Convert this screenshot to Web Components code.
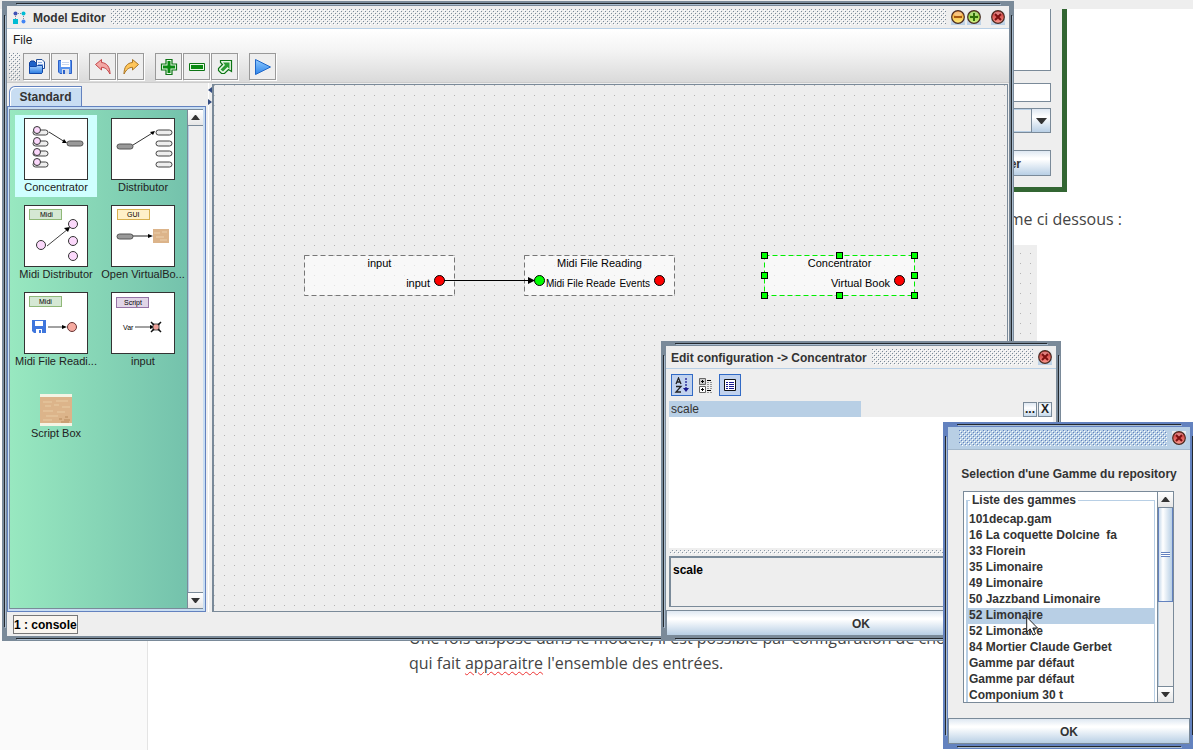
<!DOCTYPE html>
<html lang="fr">
<head>
<meta charset="utf-8">
<title>Model Editor</title>
<style>
html,body{margin:0;height:100%}
body{background:#fff;font:12px/16px "Liberation Sans",Arial,sans-serif;color:#333;overflow:hidden}
</style>
</head>
<body>
<model-desktop></model-desktop>
<script>
const bumps = (c, w='%23fff') => `url("data:image/svg+xml,%3Csvg xmlns='http://www.w3.org/2000/svg' width='4' height='4' shape-rendering='crispEdges'%3E%3Cpath fill='%23${c}' d='M0 0h1v1h-1zM2 2h1v1h-1z'/%3E%3Cpath fill='${w}' d='M1 1h1v1h-1zM3 3h1v1h-1z'/%3E%3C/svg%3E")`;

function define(name, html, setup){
  const t = document.createElement('template');
  t.innerHTML = html;
  customElements.define(name, class extends HTMLElement{
    constructor(){
      super();
      this.attachShadow({mode:'open'}).append(t.content.cloneNode(true));
    }
    connectedCallback(){ if(setup) setup(this, this.shadowRoot); }
  });
}

/* round window button: minimise, maximise, close */
define('window-button', `
<style>
:host{display:block;width:14px;height:15px}
button{display:block;width:14px;height:15px;padding:0;border:0;background:linear-gradient(#eee,#b8cfe5)}
svg{display:block}
</style>
<button type="button"><svg width="14" height="15" viewBox="0 0 14 15">
<defs><linearGradient id="g" x2="0" y2="1"><stop offset="0" class="a"/><stop offset="1" class="b"/></linearGradient></defs>
<circle cx="7" cy="7" r="6.3" fill="url(#g)" stroke="#4a2a20" stroke-width="1.2"/>
<ellipse cx="7" cy="3.8" rx="4" ry="2" fill="#fff" opacity=".35"/>
<path class="m" fill="none" stroke-width="2"/></svg></button>`, (h, r) => {
  const k = {
    min:['#f08a28','#fff27a','M3 7H11','#a85a10','Minimiser'],
    max:['#6fb822','#d6f58a','M3 7H11M7 3V11','#2f6d0a','Agrandir'],
    close:['#c02424','#ff9c92','M4 4L10 10M10 4L4 10','#7d1010','Fermer']}[h.getAttribute('kind')];
  r.querySelector('.a').setAttribute('stop-color', k[0]);
  r.querySelector('.b').setAttribute('stop-color', k[1]);
  const m = r.querySelector('.m'); m.setAttribute('d', k[2]); m.setAttribute('stroke', k[3]);
  r.querySelector('button').setAttribute('aria-label', k[4]);
});

/* internal frame with the Metal border */
define('metal-window', `
<style>
:host{--frame:#7a8a99;--bar:#eee;--rule:#b8cfe5;--ink:#23282d;--shine:#a9bccf;--bumps:${bumps('7a8a99')};
display:flex;flex-direction:column;box-sizing:border-box;padding:5px;
background:
linear-gradient(var(--ink),var(--ink)) 14px 2px/calc(100% - 28px) 1px no-repeat,
linear-gradient(var(--shine),var(--shine)) 15px 3px/calc(100% - 28px) 1px no-repeat,
linear-gradient(var(--ink),var(--ink)) 14px calc(100% - 2px)/calc(100% - 28px) 1px no-repeat,
linear-gradient(var(--shine),var(--shine)) 15px calc(100% - 1px)/calc(100% - 28px) 1px no-repeat,
linear-gradient(var(--ink),var(--ink)) 2px 14px/1px calc(100% - 28px) no-repeat,
linear-gradient(var(--shine),var(--shine)) 3px 15px/1px calc(100% - 28px) no-repeat,
linear-gradient(var(--ink),var(--ink)) calc(100% - 2px) 14px/1px calc(100% - 28px) no-repeat,
linear-gradient(var(--shine),var(--shine)) calc(100% - 1px) 15px/1px calc(100% - 28px) no-repeat,
var(--frame)}
:host([active]){--frame:#6382bf;--bar:#b8cfe5;--rule:#a3b8cc;--bumps:${bumps('6382bf')}}
header{display:flex;height:22px;align-items:center;background:var(--bar);border-bottom:1px solid var(--rule);padding:0 4px 0 5px;gap:5px;flex:none}
h1{margin:0;padding-top:1px;font-size:12px;line-height:16px;font-weight:bold;white-space:nowrap;display:flex;align-items:center}
.b{flex:1;height:16px;background:var(--bumps)}
:host([active]) .b{margin-left:1px}
main{flex:1;min-height:0;display:flex;flex-direction:column;background:#eee}
</style>
<header><h1><slot name="title"></slot></h1><div class="b"></div><slot name="buttons"></slot></header>
<main><slot></slot></main>`);

define('metal-button', `
<style>
:host{display:block}
button{display:block;box-sizing:border-box;width:100%;height:26px;border:1px solid #7a8a99;padding:2px 0 0;color:#333;
font:bold 12px/16px "Liberation Sans",Arial,sans-serif;background:linear-gradient(#dfe8f2,#fff 30%,#fff 35%,#b8cfe5)}
:host([end]) button{text-align:right;padding-right:29px}
</style><button type="button"><slot></slot></button>`);

define('metal-scrollbar', `
<style>
:host{display:flex;flex-direction:column;box-sizing:border-box;width:16px;border-left:1px solid #7a8a99;background:#eee}
button{height:16px;padding:0;border:0;border-bottom:1px solid #7a8a99;background:linear-gradient(#fff,#e6e6e6);flex:none}
button.d{border-bottom:0;border-top:1px solid #7a8a99}
svg{display:block;margin:auto}
.t{flex:1;display:flex;flex-direction:column;border-left:1px solid #b8cfe5}
.thumb{display:none;height:var(--thumb,0);border:1px solid #6382bf;border-top:0;margin-left:-1px;
background:linear-gradient(90deg,#c8daec,#fff 30%,#b8cfe5);align-items:center;justify-content:center}
:host([thumb]) .thumb{display:flex}
.thumb i{width:9px;height:5px;background:repeating-linear-gradient(#6382bf 0 1px,#fff 1px 2px)}
</style>
<button type="button" aria-label="Haut"><svg width="9" height="5"><path d="M0 5L4 0H5L9 5Z" fill="#333"/></svg></button>
<div class="t"><div class="thumb"><i></i></div></div>
<button type="button" class="d" aria-label="Bas"><svg width="9" height="5"><path d="M0 0L4 5H5L9 0Z" fill="#333"/></svg></button>`);

define('tool-button', `
<style>
:host{display:block}
button{display:flex;align-items:center;justify-content:center;box-sizing:border-box;width:27px;height:27px;padding:0;
border:1px solid #999;background:#eee;box-shadow:1px 1px #fff}
:host([flat]) button{width:22px;height:22px;border:1px solid transparent;box-shadow:none;background:none}
:host([flat][on]) button{border-color:#316ac5;background:#c1d2ee}
</style><button type="button"><slot></slot></button>`, (h, r) =>
  r.querySelector('button').setAttribute('aria-label', h.getAttribute('label')));

define('editor-toolbar', `
<style>
:host{display:block;background:linear-gradient(#fff,#f4f4f4 40%,#dadada);border-bottom:1px solid #ccc;flex:none}
nav{height:21px;display:flex;padding:0 6px}
nav button{border:0;background:none;padding:0;font:12px/16px "Liberation Sans",Arial,sans-serif;color:#222}
.bar{display:flex;height:29px;padding:3px 2px 0;gap:1px}
.grip{width:11px;height:28px;margin-right:2px;background:${bumps('7a8a99')}}
.gap{width:9px}
svg{display:block}
</style>
<nav><button type="button">File</button></nav>
<div class="bar">
<span class="grip"></span>
<tool-button label="Ouvrir"><svg width="18" height="18" viewBox="0 0 18 18"><defs><linearGradient id="f" x2="0" y2="1"><stop offset="0" stop-color="#a8d4ff"/><stop offset="1" stop-color="#2a7be0"/></linearGradient></defs><path d="M1.500 15.500V4.500L3 3H6L7.500 4.500H13.500V15.500Z" fill="#1d62c8" stroke="#0c3c98"/><path d="M8.500 1.500H14L16.500 4V10.500H8.500Z" fill="#f2f7ff" stroke="#234f98"/><path d="M10 4.500h4M10 6.500h5" stroke="#8db0e2"/><path d="M1.500 8.500H8L9.500 7.500H14.500V14.500L13.500 15.500H2.500L1.500 14.500Z" fill="url(#f)" stroke="#1248a8"/></svg></tool-button>
<tool-button label="Enregistrer"><svg width="16" height="16" viewBox="0 0 16 16"><path d="M1.500 1.500H14.500V14.500H3L1.500 13Z" fill="#5b95ee" stroke="#2c60c8"/><path d="M4 1H13V8H4Z" fill="#fff"/><path d="M5 3.500h7M5 5.500h7" stroke="#c8d6ee"/><path d="M5 10H12V15H5Z" fill="#d5ddea"/><path d="M6 11h2v4H6z" fill="#2c60c8"/></svg></tool-button>
<span class="gap"></span>
<tool-button label="Annuler"><svg width="18" height="18" viewBox="0 0 18 18"><path d="M1.500 6.500L7.500 1.500V4.500C13 5 16 9 16 16C13.500 11.500 11.500 9.500 7.500 9.300V12Z" fill="#f3a7a4" stroke="#c4474a"/></svg></tool-button>
<tool-button label="Rétablir"><svg width="18" height="18" viewBox="0 0 18 18"><path d="M16.500 6.500L10.500 1.500V4.500C5 5 2 9 2 16C4.500 11.500 6.500 9.500 10.500 9.300V12Z" fill="#ffc65a" stroke="#a87424"/></svg></tool-button>
<span class="gap"></span>
<tool-button label="Ajouter"><svg width="18" height="18" viewBox="0 0 18 18"><path d="M6 1.500H12V6H16.500V12H12V16.500H6V12H1.500V6H6Z" fill="#e8f8e6" stroke="#0c7414" stroke-width="1.200"/><path d="M7.500 3H10.500V7.500H15V10.500H10.500V15H7.500V10.500H3V7.500H7.500Z" fill="#0a8a12"/></svg></tool-button>
<tool-button label="Retirer"><svg width="18" height="18" viewBox="0 0 18 18"><path d="M1.500 5.500H16.500V12.500H1.500Z" fill="#e8f8e6" stroke="#0c7414"/><path d="M3 7H15V11H3Z" fill="#0a8a12"/></svg></tool-button>
<tool-button label="Exporter"><svg width="18" height="18" viewBox="0 0 18 18"><path d="M4.500 2.500H15.500V13.500L12.500 11.500L8.500 15.500H5.500L2.500 12.500V10.500L6.500 6.500L4.500 4.500Z" fill="#e8f8e6" stroke="#0c7414" stroke-width="1.200"/><path d="M7 4.500H13.500V11L11.500 9L7 13.500L4.500 11.500L9 7Z" fill="#2c9c34"/></svg></tool-button>
<span class="gap"></span>
<tool-button label="Lancer"><svg width="18" height="18" viewBox="0 0 18 18"><defs><linearGradient id="p" x2="0" y2="1"><stop offset="0" stop-color="#8cc8ff"/><stop offset="1" stop-color="#2f86ea"/></linearGradient></defs><path d="M1.500 1.500L16.500 9L1.500 16.500Z" fill="url(#p)" stroke="#1e66c8"/></svg></tool-button>
</div>`);

define('palette-item', `
<style>
:host{display:block}
button{display:flex;flex-direction:column;align-items:center;justify-content:center;width:82px;height:82px;padding:0;border:0;background:none;
font:11px/14px "Liberation Sans",Arial,sans-serif;color:#222;white-space:nowrap}
:host([selected]) button{background:#cfffff}
.i{display:block;box-sizing:border-box;border:1px solid #333;width:64px;height:62px;background:#fff}
:host([plain]) .i{border:0;width:32px;height:32px}
</style>
<button type="button"><span class="i"><slot name="icon"></slot></span><span><slot></slot></span></button>`);

define('component-palette', `
<style>
:host{display:flex;flex-direction:column;width:199px;padding-top:3px;margin-right:1px;flex:none}
.tab{align-self:flex-start;margin-left:2px;height:20px;width:73px;box-sizing:border-box;padding:0;border:1px solid #6382bf;border-bottom:0;
border-top-left-radius:6px;background:#c8ddf2;color:#333;font:bold 12px/16px "Liberation Sans",Arial,sans-serif;box-shadow:inset 1px 1px #fff}
.pane{flex:1;min-height:0;box-sizing:border-box;border:1px solid #6382bf;background:#c8ddf2;padding:2px 2px 2px 1px;display:flex}
.view{flex:1;display:flex;border:1px solid #7a8a99;border-right:0}
.grid{flex:1;display:grid;grid-template-columns:82px 82px;grid-auto-rows:82px;gap:5px;align-content:start;padding:5px 0 5px 5px;
background:linear-gradient(90deg,#98e8c0,#74c2ac)}
svg{display:block;font:8px "Liberation Sans",Arial,sans-serif}
</style>
<button class="tab" type="button" role="tab" aria-selected="true">Standard</button>
<div class="pane"><div class="view"><div class="grid">
<palette-item selected>Concentrator
<svg slot="icon" width="62" height="60"><g fill="#eee" stroke="#444"><rect x="8" y="11" width="15" height="5" rx="2.500"/><rect x="8" y="22" width="15" height="5" rx="2.500"/><rect x="8" y="32" width="15" height="5" rx="2.500"/><rect x="8" y="43" width="15" height="5" rx="2.500"/></g><g fill="#fbd8fb" stroke="#333"><circle cx="12" cy="11" r="3.500"/><circle cx="12" cy="22" r="3.500"/><circle cx="12" cy="33" r="3.500"/><circle cx="12" cy="43" r="3.500"/></g><path d="M24 13L40 23" stroke="#333" /><path d="M42 24L37 24L39 20Z"/><rect x="42" y="22" width="16" height="5" rx="2.500" fill="#999" stroke="#555"/></svg></palette-item>
<palette-item>Distributor
<svg slot="icon" width="62" height="60"><g fill="#eee" stroke="#444"><rect x="44" y="11" width="16" height="5" rx="2.500"/><rect x="44" y="22" width="16" height="5" rx="2.500"/><rect x="44" y="32" width="16" height="5" rx="2.500"/><rect x="44" y="43" width="16" height="5" rx="2.500"/></g><path d="M21 26L42 13" stroke="#333"/><path d="M43 12L38 13L41 16Z"/><rect x="5" y="25" width="16" height="5" rx="2.500" fill="#999" stroke="#555"/></svg></palette-item>
<palette-item>Midi Distributor
<svg slot="icon" width="62" height="60"><rect x="4.500" y="3.500" width="32" height="10" fill="#d5e8d4" stroke="#90b878"/><text x="15" y="11" font-size="7">Midi</text><path d="M22 40L43 23" stroke="#444"/><path d="M45 21L39 22L43 26Z"/><g fill="#fbd8fb" stroke="#333"><circle cx="16" cy="39" r="4.500"/><circle cx="48" cy="18" r="4.500"/><circle cx="48" cy="35" r="4.500"/><circle cx="48" cy="50" r="4.500"/></g></svg></palette-item>
<palette-item>Open VirtualBo...
<svg slot="icon" width="62" height="60"><rect x="5.500" y="3.500" width="32" height="10" fill="#fff0c8" stroke="#d8b050"/><text x="15" y="11" font-size="7">GUI</text><path d="M20 30H38" stroke="#222"/><path d="M41 30L36 28V32Z"/><rect x="5" y="28" width="16" height="5" rx="2.500" fill="#999" stroke="#555"/><rect x="41" y="23" width="16" height="14" fill="#dcb48a"/><path d="M42 27h6M50 26h5M44 31h8M48 34h7" stroke="#ecd0ac"/></svg></palette-item>
<palette-item>Midi File Readi...
<svg slot="icon" width="62" height="60"><rect x="4.500" y="3.500" width="32" height="10" fill="#d5e8d4" stroke="#90b878"/><text x="14" y="11" font-size="7">Midi</text><path d="M7 27H21V40H9L7 38Z" fill="#3f76dd"/><path d="M10 28H18V33H10ZM11 36H17V40H11Z" fill="#fff"/><path d="M14 37h2v3h-2z" fill="#3f76dd"/><path d="M23 34H38" stroke="#444"/><path d="M42 34L37 32V36Z"/><circle cx="47" cy="34" r="4.500" fill="#f6aaa0" stroke="#633"/></svg></palette-item>
<palette-item>input
<svg slot="icon" width="62" height="60"><rect x="4.500" y="4.500" width="32" height="10" fill="#e1d5e7" stroke="#9673a6"/><text x="12" y="12" font-size="7">Script</text><text x="11" y="37" font-size="7">Var</text><path d="M23 34H40" stroke="#444"/><path d="M43 34L38 32V36Z"/><rect x="41" y="31" width="6" height="6" fill="#f0a098" stroke="#555"/><path d="M39 29L42 32M49 29L46 32M39 39L42 36M49 39L46 36" stroke="#111" stroke-width="1.500"/></svg></palette-item>
<palette-item plain>Script Box
<svg slot="icon" width="32" height="32"><rect width="32" height="32" fill="#dcb48a"/><path d="M0 0H32V3H0ZM0 29H32V32H0Z" fill="#f4f4e4"/><path d="M3 8h9M16 7h12M5 12h6M14 11h5M22 13h8M3 17h10M17 18h8M6 22h12M3 26h9" stroke="#e8cca4"/><path d="M19 25h3M24 26h6M21 28h8M25 23h3" stroke="#b88a5c"/></svg></palette-item>
</div><metal-scrollbar></metal-scrollbar></div></div>`);

/* graph node: title, input and output ports */
define('graph-node', `
<style>
:host{position:absolute;display:block;width:151px;height:41px;font-size:11px;line-height:13px;color:#000}
svg.f{position:absolute;inset:0;overflow:visible}
.t{position:relative;text-align:center;padding:2px 0 5px}
.p{position:relative;display:flex;padding:0 10px;align-items:center;height:13px;white-space:nowrap}
.in,.out{box-sizing:border-box;width:11px;height:11px;border-radius:50%;border:1px solid #000;background:red;flex:none;margin-bottom:3px}
.in{background:#0f0;display:none}
:host([input]) .in{display:block}
:host([input]) .p{font-size:10px}
.l{flex:1;padding-left:1px;margin-top:3px}
.r{margin:3px 4px 0 0}
.h{display:none}
:host([selected]) .h{display:inline}
:host([selected]) .e{stroke:#0e0}
</style>
<svg class="f" width="151" height="41"><rect class="e" x=".5" y=".5" width="150" height="40" fill="#fff" fill-opacity=".6" stroke="#777" stroke-dasharray="5 3"/></svg>
<div class="t"><slot></slot></div>
<div class="p"><span class="in"></span><span class="l"><slot name="in"></slot></span><span class="r"><slot name="out"></slot></span><span class="out"></span></div>
<svg class="f h" width="151" height="41"></svg>`, (h, r) => {
  let s = '';
  for (const [x, y] of [[0,0],[75,0],[150,0],[0,20],[150,20],[0,40],[75,40],[150,40]])
    s += `<rect x="${x-3}" y="${y-3}" width="7" height="7"/><rect x="${x-2}" y="${y-2}" width="5" height="5" fill="#0f0"/>`;
  r.querySelector('.h').innerHTML = s;
});

define('graph-canvas', `
<style>
:host{display:block;position:relative;flex:1;overflow:hidden;margin:1px 1px 0 0;border:solid #7a8a99;border-width:1px 1px 1px 2px;
background:url("data:image/svg+xml,%3Csvg xmlns='http://www.w3.org/2000/svg' width='10' height='10'%3E%3Cpath fill='%23b4b4b4' d='M0 0h1v1h-1z'/%3E%3C/svg%3E"),#eee}
.n1{left:90px;top:170px}.n2{left:310px;top:170px}.n3{left:550px;top:170px}
.w{position:absolute;left:230px;top:190px}
</style>
<graph-node class="n1">input<span slot="out">input</span></graph-node>
<graph-node class="n2" input>Midi File Reading<span slot="in">Midi File Reade</span><span slot="out">Events</span></graph-node>
<graph-node class="n3" selected>Concentrator<span slot="out">Virtual Book</span></graph-node>
<svg class="w" width="92" height="12"><path d="M0 5.500H86" stroke="#000"/><path d="M91 5.500L84 2V9Z"/></svg>`);

define('editor-window', `
<style>
:host{display:flex;flex-direction:column;flex:1;min-height:0}
.body{flex:1;min-height:0;display:flex;background:#eee}
.split{width:5px;flex:none;background:linear-gradient(90deg,#eee 1px,#fff 1px 2px,#eee 2px)}
.split svg{display:block}
footer{height:24px;flex:none;padding:3px 6px 0;box-sizing:border-box;background:#eee}
footer button{display:block;height:19px;border:1px solid #777;padding:1px 0 0;background:#faf6f0;color:#000;font:bold 12px/16px "Liberation Sans",Arial,sans-serif}
</style>
<editor-toolbar></editor-toolbar>
<div class="body"><component-palette></component-palette>
<div class="split"><svg width="5" height="24"><path d="M5 4V10L1 7Z M1 16V22L5 19Z" fill="#334c80"/></svg></div>
<graph-canvas></graph-canvas></div>
<footer><button type="button">1 : console</button></footer>`);

define('property-sheet', `
<style>
:host{display:flex;flex-direction:column;flex:1;min-height:0}
.bar{display:flex;gap:2px;padding:5px 5px 0}
svg{display:block}
.sheet{flex:1;margin:5px 3px 0;background:#fff}
table{width:100%;border-collapse:collapse;table-layout:fixed;background:#eee}
th,td{padding:0;height:16px;line-height:15px;text-align:left;font-weight:normal}
th{background:#b8cfe5;padding-left:2px}
.c{display:flex;justify-content:flex-end;gap:1px;padding-right:1px}
.c button{box-sizing:border-box;width:14px;height:15px;padding:0;border:1px solid #7a8a99;background:linear-gradient(#dfe8f2,#fff 40%,#c4d8ea);
font:bold 12px/12px "Liberation Sans",Arial,sans-serif;color:#222}
.split{height:8px;margin:0 4px;background:${bumps('8a98a6')} 0 2px/4px 4px content-box;box-sizing:border-box;padding:2px 0}
.desc{margin:0 3px 3px;height:48px;border:solid #7a8a99;border-width:2px 1px 1px 2px;color:#000;font-weight:bold}
.desc p{margin:4px 2px}
</style>
<div class="bar">
<tool-button flat on label="Tri alphabétique"><svg width="16" height="16" viewBox="0 0 16 16" fill="none" stroke="#222" stroke-width="1.300"><path d="M2 7L4.500 1L7 7M3 5H6M2 9.500H7L2 15H7"/><path d="M12 1V12" stroke="#1a1a90" stroke-dasharray="2 1"/><path d="M9 11H15L12 15Z" fill="#1a1a90" stroke="none"/></svg></tool-button>
<tool-button flat label="Catégories"><svg width="16" height="16" viewBox="0 0 16 16" fill="none" stroke="#666"><path d="M1.500 1.500H7.500V7.500H1.500Z" fill="#ccc"/><path d="M1.500 9.500H7.500V15.500H1.500Z" fill="#fff"/><path d="M3 4.500H6M4.500 3V6M3 12.500H6M4.500 11V14" stroke="#000"/><path d="M9 3.500H13M9 13.500H13" stroke="#000"/><path d="M9 5.500H15M9 7.500H15M9 9.500H15M9 11.500H15M9 15.500H15" stroke="#999" stroke-dasharray="2 1"/></svg></tool-button>
<tool-button flat on label="Description"><svg width="14" height="14" viewBox="0 0 14 14"><path d="M1.500 1.500H12.500V12.500H1.500Z" fill="#fff" stroke="#111"/><path d="M3 4.500H5M3 6.500H5M3 8.500H5M3 10.500H5M6 4.500H11M6 6.500H11M6 8.500H11M6 10.500H11" stroke="#1a1a90"/></svg></tool-button>
</div>
<div class="sheet"><table><tr><th scope="row">scale</th><td><div class="c"><button type="button">...</button><button type="button">X</button></div></td></tr></table></div>
<div class="split"></div>
<div class="desc"><p>scale</p></div>
<metal-button>OK</metal-button>`);

define('scale-chooser', `
<style>
:host{display:flex;flex-direction:column;flex:1;min-height:0;font-weight:bold}
label{text-align:center;padding:16px 0 9px;white-space:nowrap}
.pane{flex:1;min-height:0;display:flex;margin:0 16px 15px 15px;border:1px solid #7a8a99;background:#fff;overflow:hidden}
fieldset{flex:1;min-width:0;margin:0 2px;padding:4px 0 0;border:1px solid #b8cfe5;border-left-width:2px;height:220px;box-sizing:border-box}
legend{margin-left:2px;padding:0 2px;line-height:16px}
select{display:block;width:100%;height:192px;border:0;padding:0;margin:0;outline:0;overflow:hidden;background:#fff;color:#333;font:bold 12px/16px "Liberation Sans",Arial,sans-serif;scrollbar-width:none}
option{padding:0 0 0 1px;height:16px;min-height:16px;font:bold 12px/16px "Liberation Sans",Arial,sans-serif;color:#333;white-space:pre}
option:checked{background:linear-gradient(#b8cfe5,#b8cfe5);color:#333}
metal-scrollbar{--thumb:93px}
</style>
<label for="g">Selection d'une Gamme du repository</label>
<div class="pane"><fieldset><legend>Liste des gammes</legend>
<select id="g" size="12"><option>101decap.gam<option>16 La coquette Dolcine&nbsp; fa<option>33 Florein<option>35 Limonaire<option>49 Limonaire<option>50 Jazzband Limonaire<option selected>52 Limonaire<option>52 Limonaire<option>84 Mortier Claude Gerbet<option>Gamme par défaut<option>Gamme par défaut<option>Componium 30 t</select></fieldset>
<metal-scrollbar thumb></metal-scrollbar></div>
<metal-button>OK</metal-button>`);

/* form behind the editor */
define('form-window', `
<style>
:host{display:block;box-sizing:border-box;border:solid #363;border-width:0 5px 5px;padding:0 11px 11px;
background:
linear-gradient(#1c241c,#1c241c) 0 calc(100% - 2px)/calc(100% - 12px) 1px no-repeat border-box,
linear-gradient(#a3b8cc,#a3b8cc) 0 calc(100% - 1px)/calc(100% - 12px) 1px no-repeat border-box,
#eee}
textarea,input,select{display:block;box-sizing:border-box;width:100%;margin:0;border:1px solid #7a8a99;border-radius:0;background:#fff;resize:none;outline:0}
textarea{height:62px;border-top:0;margin-bottom:12px}
input{height:19px;margin-bottom:6px}
.combo{position:relative;margin-bottom:17px}
select{height:25px;appearance:none;background:#eee;box-shadow:inset 0 0 0 1px #b8cfe5}
.combo span{position:absolute;right:0;top:0;width:20px;height:25px;box-sizing:border-box;border:1px solid #7a8a99;background:linear-gradient(#dfe8f2,#fff 35%,#b8cfe5);display:flex;align-items:center;justify-content:center;pointer-events:none}
</style>
<textarea aria-label="Description"></textarea><input type="text" aria-label="Nom">
<div class="combo"><select aria-label="Type"></select><span><svg width="11" height="6"><path d="M0 0H11L6 6H5Z" fill="#333"/></svg></span></div>
<metal-button end>er</metal-button>`);

define('tutorial-page', `
<style>
:host{display:flex;flex-direction:column;min-height:100vh;font:16px/25px "Open Sans",sans-serif;color:#444}
.top{height:9px;background:#eee}
.row{flex:1;display:flex}
aside{width:147px;background:#fafafa;border-right:1px solid #e4e4e4}
article{flex:1;min-width:0}
.a{margin:198px 71px 13px 0;text-align:right}
figure{margin:0 156px 26px 261px;height:355px;background:url("data:image/svg+xml,%3Csvg xmlns='http://www.w3.org/2000/svg' width='10' height='10'%3E%3Cpath fill='%23b4b4b4' d='M1 8h1v1h-1z'/%3E%3C/svg%3E"),#eee}
.b{margin:0 0 0 261px;white-space:nowrap}
u{text-decoration:underline wavy #e33 1px;text-underline-offset:2px}
</style>
<div class="top"></div><div class="row"><aside></aside><article>
<p class="a">me ci dessous :</p><figure></figure>
<p class="b">Une fois disposé dans le modèle, il est possible par configuration de cho<br>qui fait <u>apparaitre</u> l'ensemble des entrées.</p>
</article></div>`);

define('model-desktop', `
<style>
:host{display:block;position:relative;height:100vh;overflow:hidden}
metal-window,form-window{position:absolute}
form-window{right:126px;top:9px;width:200px}
.main{left:2px;right:179px;top:1px;bottom:109px}
.conf{right:132px;width:400px;top:341px;bottom:109px}
.sel{right:-2px;width:252px;top:422px;bottom:1px}
.logo{margin:0 7px 0 1px}
.cur{position:absolute;right:153px;top:616px}
.min{margin-right:-3px}.max{margin-right:5px}
</style>
<tutorial-page></tutorial-page>
<form-window></form-window>
<metal-window class="main"><svg class="logo" slot="title" width="13" height="13"><circle cx="2.500" cy="2.500" r="2" fill="#3f51b5"/><circle cx="10.500" cy="2.500" r="2" fill="#00bcd4"/><path d="M5 2.500h3M2.500 5v3M10.500 5v3" stroke="#889" stroke-dasharray="1 1"/><rect y="8" width="5" height="5" fill="#00bcd4"/><circle cx="10.500" cy="10.500" r="2" fill="#4285f4"/></svg><span slot="title">Model Editor</span>
<window-button class="min" slot="buttons" kind="min"></window-button><window-button class="max" slot="buttons" kind="max"></window-button><window-button slot="buttons" kind="close"></window-button>
<editor-window></editor-window></metal-window>
<metal-window class="conf"><span slot="title">Edit configuration -&gt; Concentrator</span><window-button slot="buttons" kind="close"></window-button><property-sheet></property-sheet></metal-window>
<metal-window class="sel" active><window-button slot="buttons" kind="close"></window-button><scale-chooser></scale-chooser></metal-window>
<svg class="cur" width="14" height="21" viewBox="0 0 14 21"><path d="M.7 1V16L4.200 12.800L7 19L9.500 18L6.800 12H11.500Z" fill="#fff" stroke="#222"/></svg>`);
</script>
</body>
</html>
